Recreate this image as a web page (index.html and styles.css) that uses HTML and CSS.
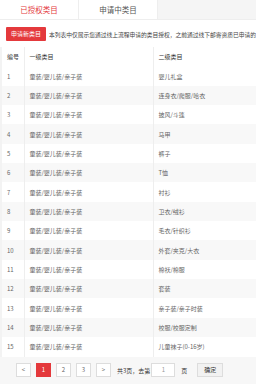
FILE: index.html
```html
<!DOCTYPE html>
<html lang="zh">
<head>
<meta charset="utf-8">
<link rel="stylesheet" href="styles.css">
</head>
<body>
<div class="tabs">
  <div class="tab active">已授权类目</div>
  <div class="tab">申请中类目</div>
</div>
<div class="toolbar">
  <button class="btn-apply">申请新类目</button>
  <span class="desc">本列表中仅展示您通过线上流程申请的类目授权，之前通过线下邮寄资质已申请的</span>
</div>
<table class="grid">
  <colgroup><col class="c1"><col class="c2"><col class="c3"></colgroup>
  <thead><tr><th>编号</th><th>一级类目</th><th>二级类目</th></tr></thead>
  <tbody>
    <tr><td>1</td><td>童装/婴儿装/亲子装</td><td>婴儿礼盒</td></tr>
    <tr><td>2</td><td>童装/婴儿装/亲子装</td><td>连身衣/爬服/哈衣</td></tr>
    <tr><td>3</td><td>童装/婴儿装/亲子装</td><td>披风/斗篷</td></tr>
    <tr><td>4</td><td>童装/婴儿装/亲子装</td><td>马甲</td></tr>
    <tr><td>5</td><td>童装/婴儿装/亲子装</td><td>裤子</td></tr>
    <tr><td>6</td><td>童装/婴儿装/亲子装</td><td>T恤</td></tr>
    <tr><td>7</td><td>童装/婴儿装/亲子装</td><td>衬衫</td></tr>
    <tr><td>8</td><td>童装/婴儿装/亲子装</td><td>卫衣/绒衫</td></tr>
    <tr><td>9</td><td>童装/婴儿装/亲子装</td><td>毛衣/针织衫</td></tr>
    <tr><td>10</td><td>童装/婴儿装/亲子装</td><td>外套/夹克/大衣</td></tr>
    <tr><td>11</td><td>童装/婴儿装/亲子装</td><td>棉袄/棉服</td></tr>
    <tr><td>12</td><td>童装/婴儿装/亲子装</td><td>套装</td></tr>
    <tr><td>13</td><td>童装/婴儿装/亲子装</td><td>亲子装/亲子时装</td></tr>
    <tr><td>14</td><td>童装/婴儿装/亲子装</td><td>校服/校服定制</td></tr>
    <tr><td>15</td><td>童装/婴儿装/亲子装</td><td>儿童袜子(0-16岁)</td></tr>
  </tbody>
</table>
<div class="pager">
  <span class="pg">&lt;</span>
  <span class="pg cur">1</span>
  <span class="pg">2</span>
  <span class="pg">3</span>
  <span class="pg">&gt;</span>
  <span class="ptext">共3页，去第</span>
  <span class="pinput">1</span>
  <span class="ptext">页</span>
  <span class="pok">确定</span>
</div>
</body>
</html>
```

FILE: styles.css
```css
html, body {
  margin: 0;
  padding: 0;
  background: #fff;
  font-family: "Noto Sans CJK SC", "Noto Sans", sans-serif;
  color: #666;
  width: 256px;
  overflow: hidden;
}
.tabs {
  display: flex;
  height: 19px;
  background: #f5f5f5;
  border-bottom: 1px solid #eeeeee;
}
.tab {
  width: 78px;
  background: #fff;
  border-right: 1px solid #eeeeee;
  font-size: 7.5px;
  line-height: 19px;
  text-align: center;
  color: #555;
}
.tab.active {
  color: #e4393c;
}
.toolbar {
  display: flex;
  align-items: center;
  gap: 3px;
  padding: 7px 0 6px 6px;
  white-space: nowrap;
  overflow: hidden;
}
.btn-apply {
  flex: none;
  width: 40px;
  height: 14px;
  padding: 0;
  border: 0;
  border-radius: 1px;
  background: #e4393c;
  color: #fff;
  font-family: inherit;
  font-size: 6px;
  line-height: 14px;
}
.desc {
  font-size: 5.75px;
  color: #444;
}
.grid {
  border-collapse: collapse;
  table-layout: fixed;
  width: 360px;
  margin-left: 0;
  border-left: 2px solid #f3f3f3;
}
.c1 { width: 23px; }
.c2 { width: 129px; }
.c3 { width: 208px; }
.grid th, .grid td {
  height: 19.35px;
  padding: 0 0 0 5px;
  font-size: 6px;
  text-align: left;
  border-right: 1px solid #eeeeee;
  white-space: nowrap;
  box-sizing: border-box;
}
.grid th {
  color: #333;
  font-weight: normal;
  background: #fff;
}
.grid td {
  color: #666;
}
.grid tbody tr:nth-child(even) td {
  background: #f8f8f8;
}
.pager {
  display: flex;
  align-items: center;
  gap: 5px;
  background: #f7f7f7;
  height: 27px;
  padding: 0 0 0 16px;
  font-size: 6px;
  color: #555;
}
.pg {
  width: 13px;
  height: 12px;
  border: 1px solid #dddddd;
  background: #fff;
  text-align: center;
  line-height: 12px;
  color: #666;
}
.pg.cur {
  background: #e4393c;
  border-color: #e4393c;
  color: #fff;
}
.ptext {
  color: #333;
  margin-left: 1px;
}
.pinput {
  width: 22px;
  height: 12px;
  border: 1px solid #dddddd;
  background: #fff;
  text-align: center;
  line-height: 12px;
  color: #999;
  margin-left: -4px;
}
.pok {
  width: 24px;
  height: 12px;
  border: 1px solid #dddddd;
  background: #f2f2f2;
  text-align: center;
  line-height: 12px;
  color: #333;
  margin-left: 5px;
}
```
